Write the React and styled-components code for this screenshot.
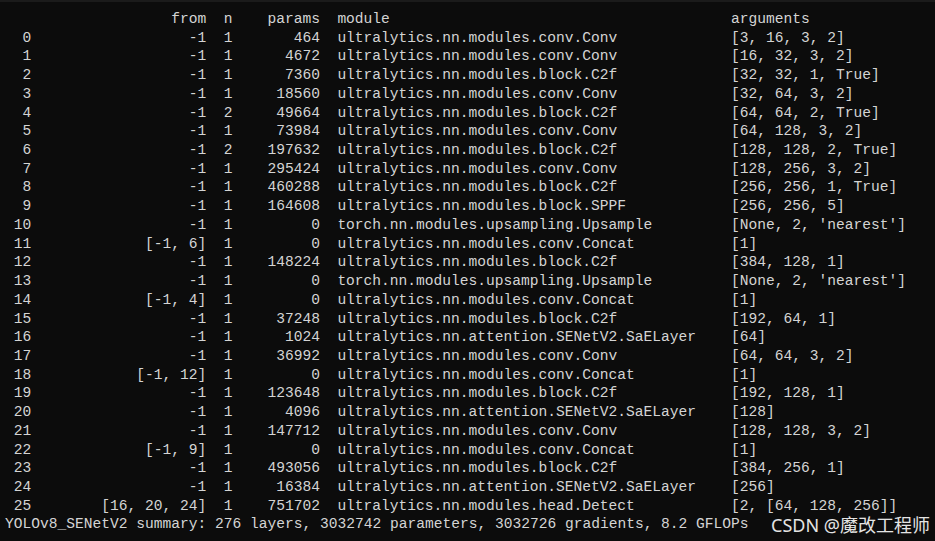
import React from "react";
import styled, { createGlobalStyle } from "styled-components";

const Global = createGlobalStyle`
  html, body { margin: 0; padding: 0; background: #0c0c0c; }
  #root { width: 935px; height: 541px; }
`;

const Screen = styled.div`
  position: relative;
  width: 935px;
  height: 541px;
  box-sizing: border-box;
  background: #0c0c0c;
  border-top: 2px solid #1b1b1b;
  padding: 8px 0 0 5px;
  overflow: hidden;
  font-family: "Liberation Mono", "DejaVu Sans Mono", monospace;
  font-size: 14.58px;
  color: #d4d4d4;
`;

const Table = styled.div`
  display: flex;
  flex-direction: column;
`;

const Row = styled.div`
  display: grid;
  grid-template-columns: 3ch 20ch 3ch 10ch 2ch 45ch auto;
  height: 18.72px;
  line-height: 18.72px;
  white-space: pre;
`;

const Cell = styled.span`
  text-align: ${(p) => (p.$right ? "right" : "left")};
  white-space: pre;
`;

const Summary = styled.div`
  height: 18.72px;
  line-height: 18.72px;
  white-space: pre;
`;

const Watermark = styled.div`
  position: absolute;
  right: 5px;
  bottom: 6px;
  font-family: "Noto Sans", "Noto Sans CJK SC", sans-serif;
  font-size: 18px;
  line-height: 20px;
  color: #e4e4e4;
  letter-spacing: 0px;
`;

const rows = [
  ["-1", 1, 464, "ultralytics.nn.modules.conv.Conv", "[3, 16, 3, 2]"],
  ["-1", 1, 4672, "ultralytics.nn.modules.conv.Conv", "[16, 32, 3, 2]"],
  ["-1", 1, 7360, "ultralytics.nn.modules.block.C2f", "[32, 32, 1, True]"],
  ["-1", 1, 18560, "ultralytics.nn.modules.conv.Conv", "[32, 64, 3, 2]"],
  ["-1", 2, 49664, "ultralytics.nn.modules.block.C2f", "[64, 64, 2, True]"],
  ["-1", 1, 73984, "ultralytics.nn.modules.conv.Conv", "[64, 128, 3, 2]"],
  ["-1", 2, 197632, "ultralytics.nn.modules.block.C2f", "[128, 128, 2, True]"],
  ["-1", 1, 295424, "ultralytics.nn.modules.conv.Conv", "[128, 256, 3, 2]"],
  ["-1", 1, 460288, "ultralytics.nn.modules.block.C2f", "[256, 256, 1, True]"],
  ["-1", 1, 164608, "ultralytics.nn.modules.block.SPPF", "[256, 256, 5]"],
  ["-1", 1, 0, "torch.nn.modules.upsampling.Upsample", "[None, 2, 'nearest']"],
  ["[-1, 6]", 1, 0, "ultralytics.nn.modules.conv.Concat", "[1]"],
  ["-1", 1, 148224, "ultralytics.nn.modules.block.C2f", "[384, 128, 1]"],
  ["-1", 1, 0, "torch.nn.modules.upsampling.Upsample", "[None, 2, 'nearest']"],
  ["[-1, 4]", 1, 0, "ultralytics.nn.modules.conv.Concat", "[1]"],
  ["-1", 1, 37248, "ultralytics.nn.modules.block.C2f", "[192, 64, 1]"],
  ["-1", 1, 1024, "ultralytics.nn.attention.SENetV2.SaELayer", "[64]"],
  ["-1", 1, 36992, "ultralytics.nn.modules.conv.Conv", "[64, 64, 3, 2]"],
  ["[-1, 12]", 1, 0, "ultralytics.nn.modules.conv.Concat", "[1]"],
  ["-1", 1, 123648, "ultralytics.nn.modules.block.C2f", "[192, 128, 1]"],
  ["-1", 1, 4096, "ultralytics.nn.attention.SENetV2.SaELayer", "[128]"],
  ["-1", 1, 147712, "ultralytics.nn.modules.conv.Conv", "[128, 128, 3, 2]"],
  ["[-1, 9]", 1, 0, "ultralytics.nn.modules.conv.Concat", "[1]"],
  ["-1", 1, 493056, "ultralytics.nn.modules.block.C2f", "[384, 256, 1]"],
  ["-1", 1, 16384, "ultralytics.nn.attention.SENetV2.SaELayer", "[256]"],
  ["[16, 20, 24]", 1, 751702, "ultralytics.nn.modules.head.Detect", "[2, [64, 128, 256]]"],
];

export default function App() {
  return (
    <>
      <Global />
      <Screen>
        <Table>
          <Row>
            <Cell $right></Cell>
            <Cell $right>from</Cell>
            <Cell $right>n</Cell>
            <Cell $right>params</Cell>
            <Cell></Cell>
            <Cell>module</Cell>
            <Cell>arguments</Cell>
          </Row>
          {rows.map(([from, n, params, mod, args], i) => (
            <Row key={i}>
              <Cell $right>{i}</Cell>
              <Cell $right>{from}</Cell>
              <Cell $right>{n}</Cell>
              <Cell $right>{params}</Cell>
              <Cell></Cell>
              <Cell>{mod}</Cell>
              <Cell>{args}</Cell>
            </Row>
          ))}
          <Summary>
            YOLOv8_SENetV2 summary: 276 layers, 3032742 parameters, 3032726 gradients, 8.2 GFLOPs
          </Summary>
        </Table>
        <Watermark>CSDN @魔改工程师</Watermark>
      </Screen>
    </>
  );
}
